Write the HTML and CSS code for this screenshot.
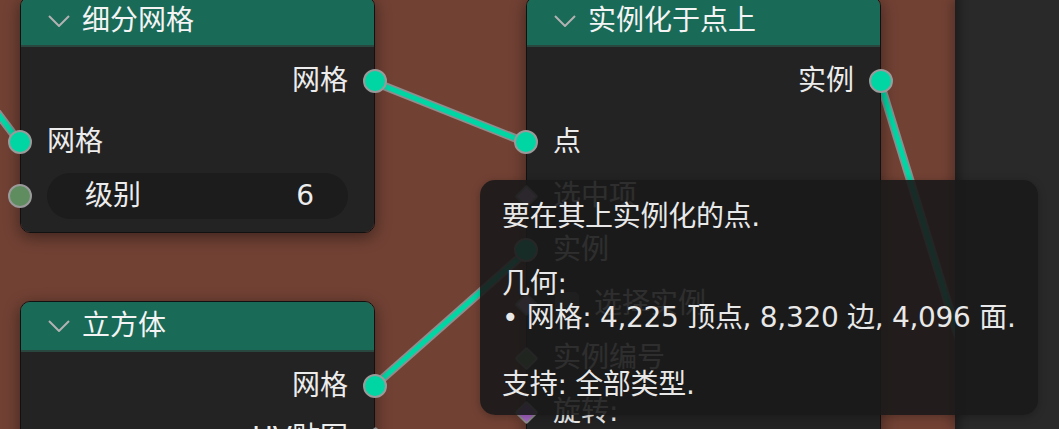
FILE: index.html
```html
<!DOCTYPE html>
<html lang="zh-CN">
<head>
<meta charset="utf-8">
<title>Geometry Nodes</title>
<link rel="stylesheet" href="styles.css">
</head>
<body>
<div class="editor">
  <div class="canvas">
    <svg class="links" width="955" height="429" viewBox="0 0 955 429">
      <g class="link-outline">
        <line x1="-10" y1="103" x2="20" y2="143"/>
        <line x1="374" y1="82" x2="527" y2="143"/>
        <line x1="373" y1="387" x2="527" y2="251"/>
        <line x1="880" y1="82" x2="990" y2="440"/>
      </g>
      <g class="link-core">
        <line x1="-10" y1="103" x2="20" y2="143"/>
        <line x1="374" y1="82" x2="527" y2="143"/>
        <line x1="373" y1="387" x2="527" y2="251"/>
        <line x1="880" y1="82" x2="990" y2="440"/>
      </g>
    </svg>

    <div class="node node-subdiv">
      <div class="node-header">
        <svg class="chevron" width="22" height="12" viewBox="0 0 22 12"><polyline points="1,1 11,11 21,1"/></svg>
        <span>细分网格</span>
      </div>
      <div class="node-body">
        <div class="row out after-out"><span>网格</span><i class="sock geo"></i></div>
        <div class="row in"><i class="sock geo"></i><span>网格</span></div>
        <div class="row in field-row"><i class="sock int"></i>
          <div class="field"><span>级别</span><span>6</span></div>
        </div>
      </div>
    </div>

    <div class="node node-cube">
      <div class="node-header">
        <svg class="chevron" width="22" height="12" viewBox="0 0 22 12"><polyline points="1,1 11,11 21,1"/></svg>
        <span>立方体</span>
      </div>
      <div class="node-body">
        <div class="row out"><span>网格</span><i class="sock geo"></i></div>
        <div class="row out uv-row"><span>UV贴图</span><i class="sock dia vec"></i></div>
      </div>
    </div>

    <div class="node node-inst">
      <div class="node-header">
        <svg class="chevron" width="22" height="12" viewBox="0 0 22 12"><polyline points="1,1 11,11 21,1"/></svg>
        <span>实例化于点上</span>
      </div>
      <div class="node-body">
        <div class="row out after-out"><span>实例</span><i class="sock geo"></i></div>
        <div class="row in"><i class="sock geo"></i><span>点</span></div>
        <div class="row in"><i class="sock dia bool"></i><span>选中项</span></div>
        <div class="row in"><i class="sock geo"></i><span>实例</span></div>
        <div class="row in"><i class="sock dia bool"></i><span class="check"></span><span>选择实例</span></div>
        <div class="row in"><i class="sock dia int"></i><span>实例编号</span></div>
        <div class="row in"><i class="sock dia rot"></i><span>旋转:</span></div>
      </div>
    </div>
  </div>
  <div class="sidebar"></div>

  <div class="tooltip">
    <p>要在其上实例化的点.</p>
    <p>&nbsp;</p>
    <p>几何:</p>
    <p>• 网格: 4,225 顶点, 8,320 边, 4,096 面.</p>
    <p>&nbsp;</p>
    <p>支持: 全部类型.</p>
  </div>
</div>
</body>
</html>
```

FILE: styles.css
```css
* { box-sizing: border-box; }

html, body {
  margin: 0;
  padding: 0;
  background: #714134;
}

body {
  font-family: "DejaVu Sans", "Noto Sans CJK SC", sans-serif;
  color: #e6e6e6;
}

.editor {
  position: relative;
  display: flex;
  width: 1059px;
  height: 429px;
  overflow: hidden;
}

.canvas {
  position: relative;
  flex: 1;
  background: #714134;
  overflow: hidden;
}

.sidebar {
  width: 104px;
  background: #292929;
  box-shadow: -3px 0 10px rgba(0, 0, 0, 0.25), inset 14px 0 10px -10px rgba(0, 0, 0, 0.35);
  z-index: 2;
}

.links {
  position: absolute;
  left: 0;
  top: 0;
  z-index: 0;
}

.link-outline line {
  stroke: #8e8e8e;
  stroke-width: 8.5;
}

.link-core line {
  stroke: #00d6a4;
  stroke-width: 5;
}

/* nodes */
.node {
  position: absolute;
  width: 355px;
  border: 1px solid #111;
  border-radius: 10px;
  box-shadow: 0 4px 16px rgba(0, 0, 0, 0.45);
  z-index: 1;
  font-size: 28px;
}

.node-subdiv { left: 20px; top: -4px; }
.node-cube { left: 20px; top: 301px; }
.node-inst { left: 526px; top: -4px; }

.node-header {
  display: flex;
  align-items: center;
  gap: 12px;
  height: 50px;
  padding-left: 27px;
  background: #1a6a58;
  border-radius: 9px 9px 0 0;
  border-bottom: 2px solid #29473e;
  color: #f4f4f4;
  line-height: 1;
}

.chevron polyline {
  fill: none;
  stroke: #b2b2b2;
  stroke-width: 2;
}

.node-body {
  display: flex;
  flex-direction: column;
  gap: 10px;
  padding: 12px 0 13px;
  background: #232323;
  border-radius: 0 0 9px 9px;
}

.node-inst .node-body { padding-bottom: 40px; }

.row {
  position: relative;
  display: flex;
  align-items: center;
  height: 44px;
  padding: 0 26px;
  line-height: 1;
  color: #ececec;
}

.row.out { justify-content: flex-end; }
.row.in { justify-content: flex-start; }
.row.after-out { margin-bottom: 7px; }
.row.uv-row { margin-top: -2px; }

.field-row {
  height: 46px;
  margin-top: -1px;
}

.field {
  flex: 1;
  display: flex;
  justify-content: space-between;
  align-items: center;
  height: 46px;
  padding: 0 34px 0 38px;
  border-radius: 23px;
  background: #1c1c1c;
}

.check {
  width: 24px;
  height: 24px;
  margin: 0 15px 0 2px;
  border-radius: 5px;
  background: #545454;
}

/* sockets */
.sock {
  position: absolute;
  top: 50%;
  width: 24px;
  height: 24px;
  margin-top: -12px;
  border: 2px solid #9a9a9a;
  border-radius: 50%;
}

.row.out .sock { right: -13px; }
.row.in .sock { left: -13px; }

.sock.geo { background: #00d6a4; }
.sock.int { background: #5f8d60; }

.sock.dia {
  width: 17px;
  height: 17px;
  margin-top: -8.5px;
  border-radius: 2px;
  transform: rotate(45deg);
  border-color: #8c8c8c;
}

.row.out .sock.dia { right: -9.5px; }
.row.in .sock.dia { left: -9.5px; }

.sock.bool { background: #cca6d6; }
.sock.dia.int { background: #598c5c; }
.sock.rot { background: #a663c7; }
.sock.vec { background: #6363c7; }

/* tooltip */
.tooltip {
  position: absolute;
  left: 480px;
  top: 180px;
  width: 558px;
  height: 235px;
  padding: 20px 22px 0;
  border-radius: 15px;
  background: rgba(26, 26, 26, 0.9);
  box-shadow: 0 2px 8px rgba(0, 0, 0, 0.25);
  z-index: 5;
  font-size: 28px;
  line-height: 33.5px;
  color: #e8e8e8;
}

.tooltip p {
  margin: 0;
  white-space: nowrap;
  letter-spacing: -0.3px;
}
```
